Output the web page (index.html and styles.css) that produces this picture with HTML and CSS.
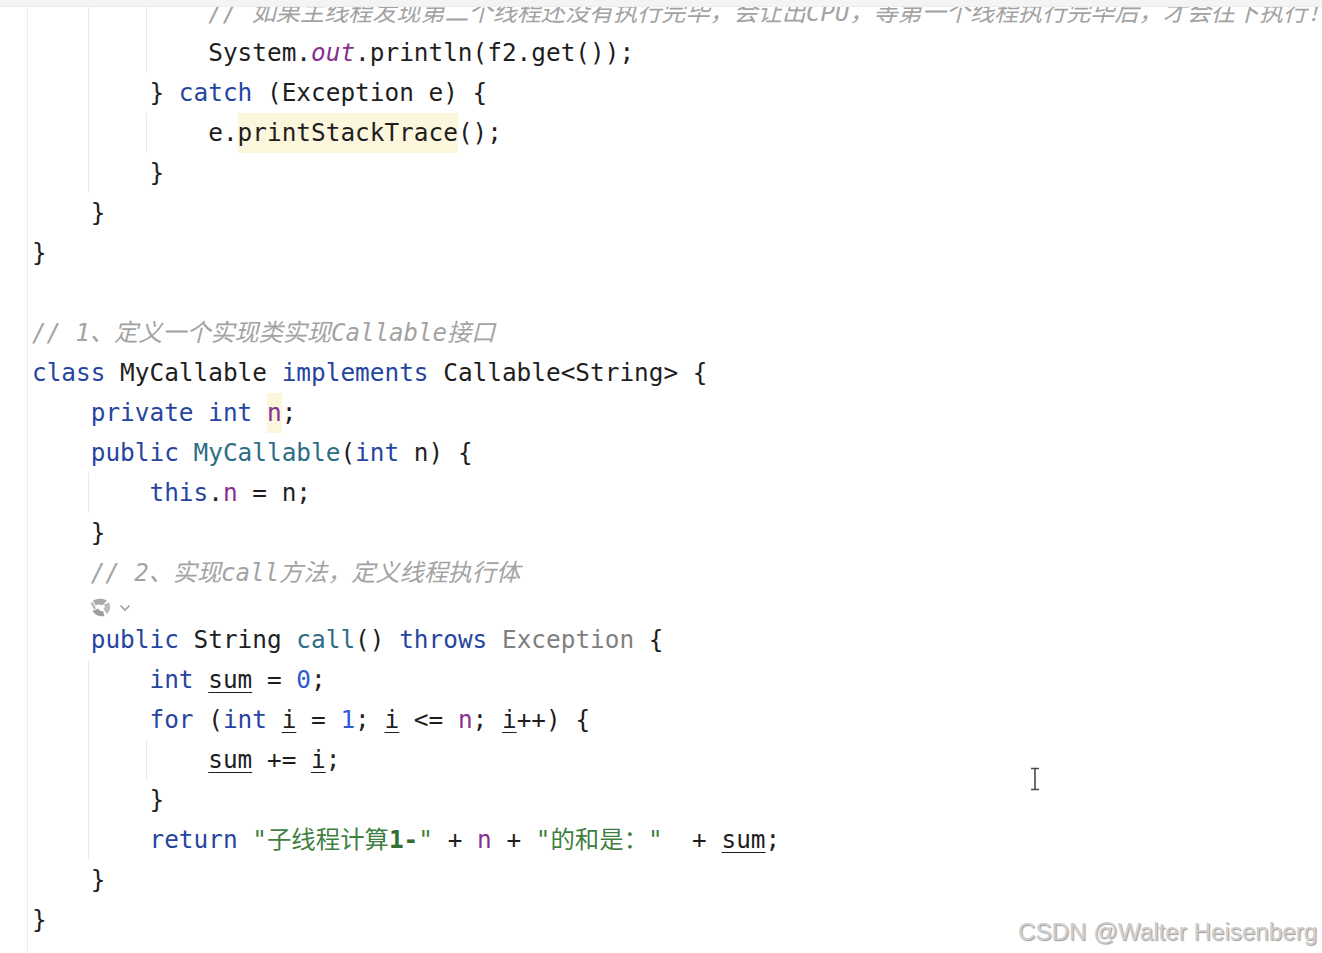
FILE: index.html
```html
<!DOCTYPE html>
<html lang="zh">
<head>
<meta charset="utf-8">
<title>MyCallable</title>
<link rel="stylesheet" href="styles.css">
</head>
<body>
<div class="topbar"></div>
<div class="code">
<div class="ln g1 g2">            <span class="c">// 如果主线程发现第二个线程还没有执行完毕，会让出CPU，等第一个线程执行完毕后，才会往下执行！</span></div>
<div class="ln g1 g2">            System.<span class="st">out</span>.println(f2.get());</div>
<div class="ln g1">        } <span class="k">catch</span> (Exception e) {</div>
<div class="ln g1 g2">            e.<span class="hl">printStackTrace</span>();</div>
<div class="ln g1">        }</div>
<div class="ln">    }</div>
<div class="ln">}</div>
<div class="ln"> </div>
<div class="ln"><span class="c">// 1、定义一个实现类实现Callable接口</span></div>
<div class="ln"><span class="k">class</span> MyCallable <span class="k">implements</span> Callable&lt;String&gt; {</div>
<div class="ln">    <span class="k">private</span> <span class="k">int</span> <span class="f hl">n</span>;</div>
<div class="ln">    <span class="k">public</span> <span class="m">MyCallable</span>(<span class="k">int</span> n) {</div>
<div class="ln g1">        <span class="k">this</span>.<span class="f">n</span> = n;</div>
<div class="ln">    }</div>
<div class="ln">    <span class="c">// 2、实现call方法，定义线程执行体</span></div>
<div class="hint">
  <svg class="hint-icon" width="22" height="20" viewBox="0 0 22 20" aria-hidden="true">
    <path d="M3 3.5 C8 1 13 1 17 3.5 L12.5 8.5 C10 7 7.5 7 5.5 8.5 Z" fill="#a9a9a9"/>
    <path d="M19 5.5 C21 9.5 20.5 13.5 17 17 L13.5 12 C15 10.5 15 9 14 7.5 Z" fill="#bababa"/>
    <path d="M14.5 19 C9.5 20 5 18 2.5 14 L8 11.5 C9 13.5 11 14.5 13 14 Z" fill="#9d9d9d"/>
    <path d="M1.5 5.5 L5 12" stroke="#b3b3b3" stroke-width="2.2" fill="none"/>
  </svg>
  <svg class="hint-chev" width="12" height="8" viewBox="0 0 12 8" aria-hidden="true">
    <polyline points="1.5,1.5 6,6 10.5,1.5" fill="none" stroke="#a0a0a0" stroke-width="1.6"/>
  </svg>
</div>
<div class="ln">    <span class="k">public</span> String <span class="m">call</span>() <span class="k">throws</span> <span class="gr">Exception</span> {</div>
<div class="ln g1">        <span class="k">int</span> <span class="u">sum</span> = <span class="num">0</span>;</div>
<div class="ln g1">        <span class="k">for</span> (<span class="k">int</span> <span class="u">i</span> = <span class="num">1</span>; <span class="u">i</span> &lt;= <span class="f">n</span>; <span class="u">i</span>++) {</div>
<div class="ln g1 g2">            <span class="u">sum</span> += <span class="u">i</span>;</div>
<div class="ln g1">        }</div>
<div class="ln g1">        <span class="k">return</span> <span class="s">"子线程计算<b class="sb">1-</b>"</span> + <span class="f">n</span> + <span class="s">"的和是："</span>  + <span class="u">sum</span>;</div>
<div class="ln">    }</div>
<div class="ln">}</div>
</div>
<svg class="ibeam" width="12" height="24" viewBox="0 0 12 24" aria-hidden="true">
  <path d="M2 1.5 H10 M6 1.5 V22.5 M2 22.5 H10" stroke="#4a4a4a" stroke-width="1.6" fill="none"/>
</svg>
<div class="watermark">CSDN @Walter Heisenberg</div>
</body>
</html>
```

FILE: styles.css
```css
html, body {
  margin: 0;
  padding: 0;
  background: #ffffff;
}

body {
  width: 1322px;
  height: 953px;
  overflow: hidden;
  position: relative;
}

.topbar {
  position: relative;
  z-index: 2;
  height: 6px;
  background: #f4f4f4;
  border-bottom: 1px solid #ececec;
}

.code {
  margin-top: -14px;
  margin-left: 27px;
  border-left: 1px solid #ececec;
  min-height: 1000px;
  font-family: "DejaVu Sans Mono", "Noto Sans CJK SC", monospace;
  font-size: 24.4px;
  color: #1e1e1e;
}

.ln {
  height: 40px;
  line-height: 40px;
  padding-left: 4px;
  white-space: pre;
  background-repeat: no-repeat;
}

.g1 {
  background-image: linear-gradient(#e9e9e9, #e9e9e9);
  background-position: 60px 0;
  background-size: 1px 100%;
}

.g1.g2 {
  background-image: linear-gradient(#e9e9e9, #e9e9e9), linear-gradient(#e9e9e9, #e9e9e9);
  background-position: 60px 0, 118px 0;
  background-size: 1px 100%, 1px 100%;
}

.k { color: #26459f; }
.c { color: #a3a3a3; font-style: italic; font-size: 24.1px; }
.f { color: #87308f; }
.st { color: #87308f; font-style: italic; }
.m { color: #2d6d86; }
.num { color: #2f5bd3; }
.s { color: #3f7f3f; }
.sb { font-weight: bold; color: #336e33; }
.gr { color: #808080; }
.u {
  text-decoration: underline;
  text-decoration-thickness: 1px;
  text-underline-offset: 4px;
}

.hl {
  display: inline-block;
  background: #fcf6dc;
}

.hint {
  height: 27px;
  padding-left: 62px;
  display: flex;
  align-items: center;
  gap: 7px;
}

.hint-icon { display: block; }
.hint-chev { display: block; margin-top: 2px; }

.ibeam {
  position: absolute;
  left: 1029px;
  top: 767px;
}

.watermark {
  position: absolute;
  left: 1018px;
  top: 917px;
  line-height: 30px;
  font-family: "Liberation Sans", Arial, sans-serif;
  font-size: 24.2px;
  color: #cfcfcf;
  text-shadow: 1px 1px 1px #9a9a9a;
  white-space: nowrap;
}
```
